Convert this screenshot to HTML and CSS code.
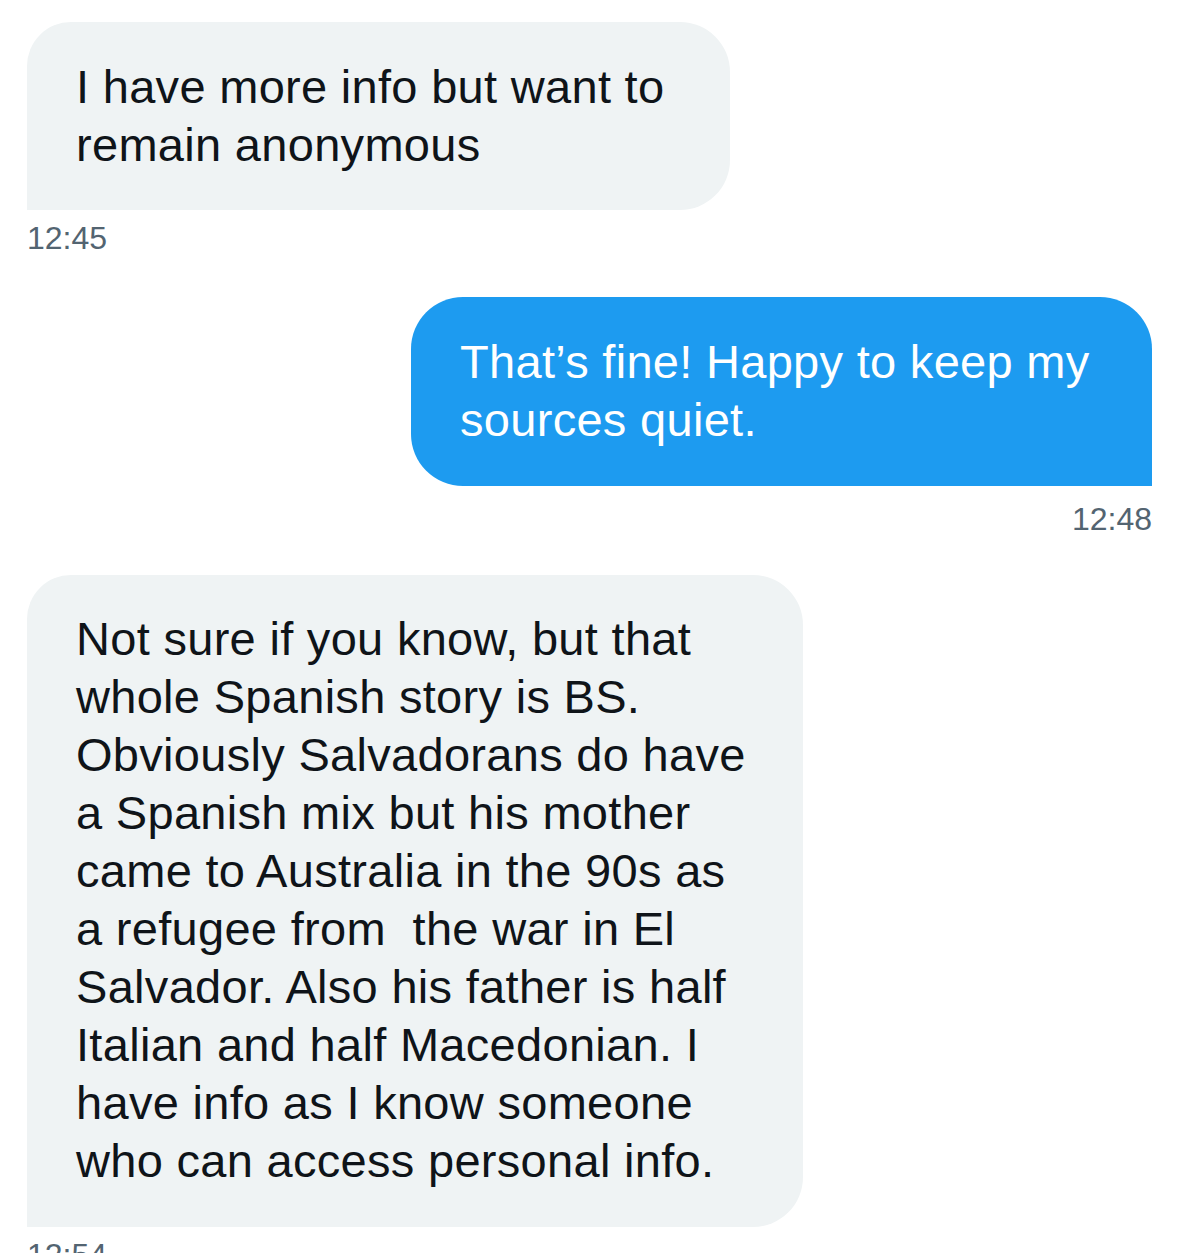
FILE: index.html
```html
<!DOCTYPE html>
<html lang="en">
<head>
<meta charset="utf-8">
<title>Chat</title>
<link rel="stylesheet" href="styles.css">
</head>
<body>
<main class="chat">
  <div class="msg msg-in">
    <div class="bubble bubble-in b1"><span class="line">I have more info but want to</span><span class="line">remain anonymous</span></div>
    <div class="time">12:45</div>
  </div>
  <div class="msg msg-out">
    <div class="bubble bubble-out b2"><span class="line">That’s fine! Happy to keep my</span><span class="line">sources quiet.</span></div>
    <div class="time">12:48</div>
  </div>
  <div class="msg msg-in m3">
    <div class="bubble bubble-in b3"><span class="line">Not sure if you know, but that</span><span class="line">whole Spanish story is BS.</span><span class="line">Obviously Salvadorans do have</span><span class="line">a Spanish mix but his mother</span><span class="line">came to Australia in the 90s as</span><span class="line">a refugee from &nbsp;the war in El</span><span class="line">Salvador. Also his father is half</span><span class="line">Italian and half Macedonian. I</span><span class="line">have info as I know someone</span><span class="line">who can access personal info.</span></div>
    <div class="time">12:54</div>
  </div>
</main>
</body>
</html>
```

FILE: styles.css
```css
html, body {
  margin: 0;
  padding: 0;
  background: #ffffff;
  overflow: hidden;
}
.chat {
  display: flex;
  flex-direction: column;
  padding: 22px 27px 0 27px;
  font-family: "Liberation Sans", Arial, sans-serif;
}
.msg {
  display: flex;
  flex-direction: column;
  gap: 10px;
}
.msg + .msg { margin-top: 41px; }
.msg + .m3 { margin-top: 38px; }
.msg-in { align-items: flex-start; }
.msg-out { align-items: flex-end; gap: 15px; }
.bubble {
  box-sizing: border-box;
  display: flex;
  flex-direction: column;
  font-size: 47px;
  line-height: 58px;
  letter-spacing: 0.3px;
  padding: 36px 40px 36px 49px;
  white-space: nowrap;
}
.bubble-in {
  background: #eff3f4;
  color: #0f1419;
  border-radius: 44px 50px 50px 0;
}
.bubble-out {
  background: #1d9bf0;
  color: #ffffff;
  border-radius: 52px 52px 0 52px;
}
.b1 { width: 703px; }
.b2 { width: 741px; height: 189px; }
.b3 { width: 776px; padding-top: 35px; padding-bottom: 37px; }
.time {
  font-size: 32px;
  line-height: 36px;
  color: #536471;
}
```
